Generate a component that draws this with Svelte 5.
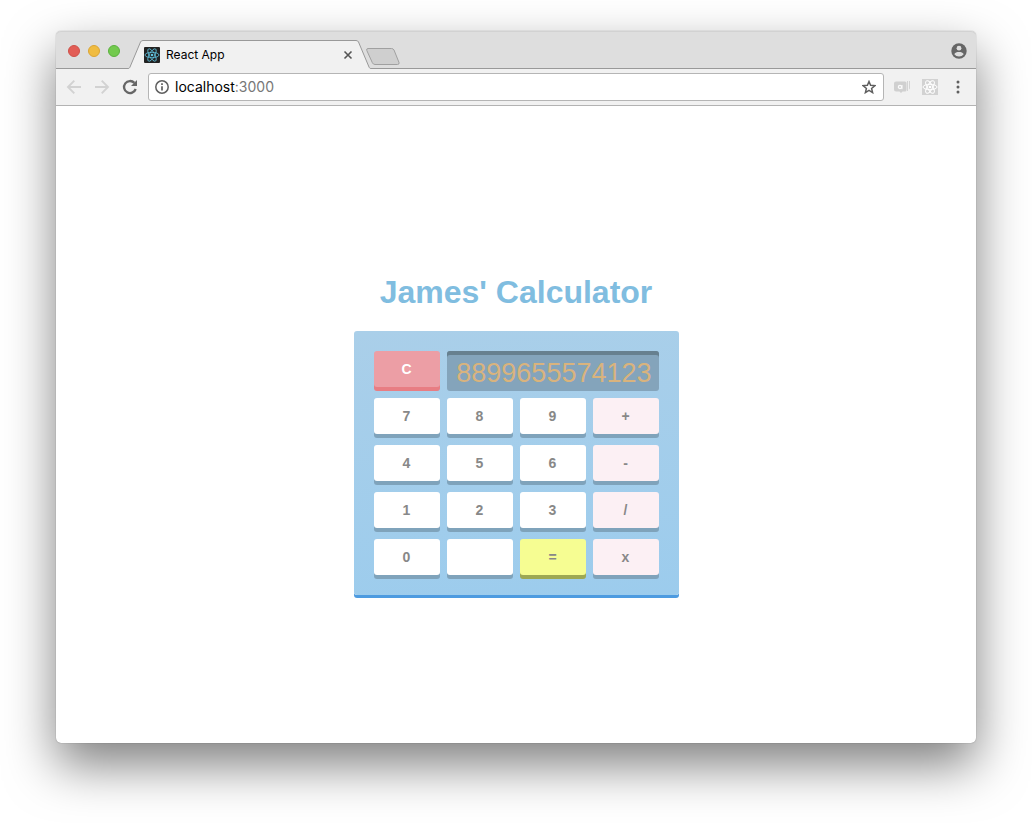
<script>
  const keys = [
    { label: '7' }, { label: '8' }, { label: '9' }, { label: '+', kind: 'operator' },
    { label: '4' }, { label: '5' }, { label: '6' }, { label: '-', kind: 'operator' },
    { label: '1' }, { label: '2' }, { label: '3' }, { label: '/', kind: 'operator' },
    { label: '0' }, { label: '' }, { label: '=', kind: 'equals' }, { label: 'x', kind: 'operator' }
  ];

  let display = $state('8899655574123');

  function press(label) {
    if (label === '=') {
      const parts = display.match(/^(-?[\d.]+)([-+/x])([\d.]+)$/);
      if (!parts) return;
      const a = Number(parts[1]);
      const b = Number(parts[3]);
      const results = { '+': a + b, '-': a - b, '/': a / b, x: a * b };
      display = String(results[parts[2]]);
    } else {
      display += label;
    }
  }
</script>

{#snippet atom(width)}
  <g fill="none" stroke="currentColor" stroke-width={width}>
    <ellipse cx="8" cy="8" rx="7" ry="2.7" />
    <ellipse cx="8" cy="8" rx="7" ry="2.7" transform="rotate(60 8 8)" />
    <ellipse cx="8" cy="8" rx="7" ry="2.7" transform="rotate(120 8 8)" />
  </g>
  <circle cx="8" cy="8" r="1.3" fill="currentColor" />
{/snippet}

<div class="window">
  <header class="tabstrip">
    <div class="lights">
      <button class="light red" aria-label="Close window"></button>
      <button class="light yellow" aria-label="Minimise window"></button>
      <button class="light green" aria-label="Zoom window"></button>
    </div>
    <div class="tab">
      <svg class="edge" width="15" height="29" viewBox="0 0 15 29" aria-hidden="true">
        <path d="M0 29V28.5C1 28.5 1.5 28 2 27L12.5 2Q13.2 .5 15 .5V29Z" fill="#f1f1f1" />
        <path d="M0 28.5C1 28.5 1.5 28 2 27L12.5 2Q13.2 .5 15 .5" fill="none" stroke="#999" />
      </svg>
      <div class="tab-body">
        <svg class="favicon" width="16" height="16" viewBox="0 0 16 16" aria-hidden="true">
          <rect width="16" height="16" rx="1" fill="#222" />
          {@render atom(0.8)}
        </svg>
        <span class="tab-title">React App</span>
        <button class="close" aria-label="Close tab">
          <svg width="10" height="10" viewBox="0 0 10 10"><path d="M1.5 1.5l7 7M8.5 1.5l-7 7" stroke="#555" stroke-width="1.6" /></svg>
        </button>
      </div>
      <svg class="edge" width="15" height="29" viewBox="0 0 15 29" aria-hidden="true">
        <path d="M15 29V28.5C14 28.5 13.5 28 13 27L2.5 2Q1.8 .5 0 .5V29Z" fill="#f1f1f1" />
        <path d="M15 28.5C14 28.5 13.5 28 13 27L2.5 2Q1.8 .5 0 .5" fill="none" stroke="#999" />
      </svg>
    </div>
    <button class="newtab" aria-label="New tab">
      <svg width="34" height="17" viewBox="0 0 34 17">
        <path d="M2 .5H25.5Q27.2 .5 28 2L33 14.5Q33.5 16.5 31.5 16.5H9Q7.2 16.5 6.400 14.8L.8 2.5Q.2 .5 2 .5Z" fill="#cfcfcf" stroke="#a0a0a0" />
      </svg>
    </button>
    <button class="profile" aria-label="Profile">
      <svg width="16" height="16" viewBox="0 0 16 16">
        <circle cx="8" cy="8" r="7.7" fill="#666" />
        <circle cx="8" cy="5.2" r="2.4" fill="#dedede" />
        <path d="M3.3 11.2C3.8 9.7 6 9.100 8 9.100S12.2 9.700 12.7 11.2Q11 13.6 8 13.6T3.3 11.2Z" fill="#dedede" />
      </svg>
    </button>
  </header>

  <nav class="toolbar">
    <button aria-label="Back">
      <svg width="16" height="16" viewBox="0 0 16 16"><path d="M15 8H2.500M8.300 1.700L2 8 8.300 14.300" fill="none" stroke="#d2d2d2" stroke-width="1.900" /></svg>
    </button>
    <button aria-label="Forward">
      <svg width="16" height="16" viewBox="0 0 16 16"><path d="M1 8H13.500M7.700 1.700L14 8 7.700 14.300" fill="none" stroke="#d2d2d2" stroke-width="1.900" /></svg>
    </button>
    <button aria-label="Reload">
      <svg width="16" height="16" viewBox="0 0 16 16">
        <path d="M13.700 10A6 6 0 1 1 12.400 3.900" fill="none" stroke="#666" stroke-width="2.300" />
        <path d="M15 1V7H9Z" fill="#666" />
      </svg>
    </button>
    <div class="omnibox">
      <svg width="14" height="14" viewBox="0 0 14 14" aria-hidden="true">
        <circle cx="7" cy="7" r="6.200" fill="none" stroke="#5f5f5f" stroke-width="1.500" />
        <path d="M7 6.200V10.500M7 3.300V4.900" stroke="#5f5f5f" stroke-width="1.700" />
      </svg>
      <a class="address" href="#top"><span>localhost</span>:3000</a>
      <button class="star" aria-label="Bookmark this page">
        <svg width="14" height="14" viewBox="0 0 14 14">
          <path d="M7 1.500L8.600 5.200 12.900 5.600 9.600 8.400 10.600 12.600 7 10.400 3.400 12.600 4.400 8.400 1.100 5.600 5.400 5.200Z" fill="none" stroke="#5f5f5f" stroke-width="1.500" />
        </svg>
      </button>
    </div>
    <button aria-label="Chat extension">
      <svg width="16" height="16" viewBox="0 0 16 16">
        <path d="M2 2.500H11Q12.500 2.500 12.500 4V11Q12.500 12.500 11 12.500H8.500L7 14 5.500 12.500H2Q0 12.500 0 10.500V4.500Q0 2.500 2 2.500Z" fill="#d0d0d0" />
        <path d="M13 2H14V12H13ZM15 2H16V9.500L15 10.500Z" fill="#d4d4d4" />
        <circle cx="6" cy="8" r="1.600" fill="none" stroke="#fafafa" stroke-width="1.300" />
        <path d="M8 6V10.200" stroke="#fafafa" />
      </svg>
    </button>
    <button class="react" aria-label="React developer tools">
      <svg width="16" height="16" viewBox="0 0 16 16"><rect width="16" height="16" fill="#d2d2d2" />{@render atom(1)}</svg>
    </button>
    <button aria-label="Menu">
      <svg width="16" height="16" viewBox="0 0 16 16" fill="#5f5f5f"><circle cx="8" cy="3" r="1.500" /><circle cx="8" cy="8" r="1.500" /><circle cx="8" cy="13" r="1.500" /></svg>
    </button>
  </nav>

  <main>
    <h1>James' Calculator</h1>
    <section class="calculator" aria-label="Calculator">
      <button class="key clear" onclick={() => (display = '')}>C</button>
      <output class="display">{display}</output>
      {#each keys as key}
        <button class="key {key.kind ?? ''}" aria-label={key.label || 'Blank'} onclick={() => press(key.label)}>{key.label}</button>
      {/each}
    </section>
  </main>
</div>

<style>
  :global(body) {
    margin: 0;
    background: #fff;
  }

  :global(#app) {
    display: flex;
    box-sizing: border-box;
    min-height: 100vh;
    padding: 31px 56px 80px;
    overflow: hidden;
  }

  button {
    display: flex;
    align-items: center;
    justify-content: center;
    padding: 0;
    border: 0;
    background: none;
  }

  svg {
    display: block;
  }

  .window {
    display: flex;
    flex: 1;
    flex-direction: column;
    min-width: 0;
    border-radius: 5px;
    background: #fff;
    box-shadow: 0 0 1px rgba(0, 0, 0, 0.5), 0 22px 50px rgba(0, 0, 0, 0.5);
  }

  .tabstrip {
    display: flex;
    align-items: flex-end;
    height: 38px;
    border-radius: 5px 5px 0 0;
    background: linear-gradient(#999, #999) bottom / 100% 1px no-repeat, #dedede;
    box-shadow: inset 0 1px #d2d2d2;
  }

  .lights {
    display: flex;
    align-self: center;
    gap: 8px;
    padding: 2px 8px 0 12px;
  }

  .light {
    box-sizing: border-box;
    width: 12px;
    height: 12px;
    border: 1px solid #ce5149;
    border-radius: 50%;
    background: #e25d56;
  }

  .yellow {
    border-color: #dba534;
    background: #f0bc41;
  }

  .green {
    border-color: #5bb13e;
    background: #73ca4e;
  }

  .tab {
    display: flex;
    flex: 0 1 243px;
    min-width: 0;
  }

  .edge {
    flex: none;
  }

  .tab-body {
    display: flex;
    flex: 1;
    align-items: center;
    gap: 6px;
    min-width: 0;
    padding: 0 3px 0 1px;
    border-top: 1px solid #999;
    background: #f1f1f1;
  }

  .favicon {
    color: #61c4e0;
  }

  .tab-title {
    flex: 1;
    color: #000;
    font: 12px/16px Inter, sans-serif;
  }

  .newtab {
    padding-bottom: 4px;
    margin-left: -5px;
  }

  .profile {
    align-self: center;
    margin: 2px 9px 0 auto;
  }

  .toolbar {
    display: flex;
    align-items: center;
    gap: 12px;
    height: 36px;
    padding: 0 10px;
    border-bottom: 1px solid #b3b3b3;
    background: #f1f1f1;
  }

  .omnibox {
    display: flex;
    flex: 1;
    align-items: center;
    gap: 6px;
    height: 26px;
    padding: 0 7px 0 6px;
    border: 1px solid #b5b5b5;
    border-radius: 3px;
    margin: 0 -2px;
    background: #fff;
  }

  .address {
    flex: 1;
    color: #777;
    font: 14px/18px Inter, sans-serif;
    text-decoration: none;
  }

  .address span {
    color: #000;
  }

  .react {
    color: #fff;
  }

  main {
    display: flex;
    flex: 1;
    flex-direction: column;
    align-items: center;
    justify-content: center;
    padding-bottom: 2px;
    font-family: "Liberation Sans", Arial, sans-serif;
  }

  h1 {
    margin: 20px 0;
    padding-top: 2px;
    color: #80bde0;
    font-size: 32px;
    line-height: 37px;
  }

  .calculator {
    display: grid;
    grid-template-columns: repeat(4, 66px);
    grid-auto-rows: 36px;
    gap: 11px 7px;
    padding: 20px;
    border-radius: 3px;
    background: linear-gradient(175deg, #aacfe9, #9ccced);
    box-shadow: 0 3px #4d9be0;
  }

  .key {
    border-radius: 3px;
    background: #fff;
    box-shadow: 0 4px #7fa3bb;
    color: #888;
    font: bold 14px/36px "Liberation Sans", Arial, sans-serif;
  }

  .operator {
    background: #fcf0f4;
  }

  .equals {
    background: #f6fd92;
    box-shadow: 0 4px #9da853;
  }

  .clear {
    background: #ec9ea5;
    box-shadow: 0 4px #e87d83;
    color: #fff;
  }

  .display {
    grid-column: span 3;
    height: 40px;
    box-sizing: border-box;
    padding: 4px 7px 0;
    border-radius: 3px;
    background: #84a4bb;
    box-shadow: inset 0 4px #67808f;
    color: #d9b37d;
    font-size: 27px;
    line-height: 36px;
    text-align: right;
  }
</style>
